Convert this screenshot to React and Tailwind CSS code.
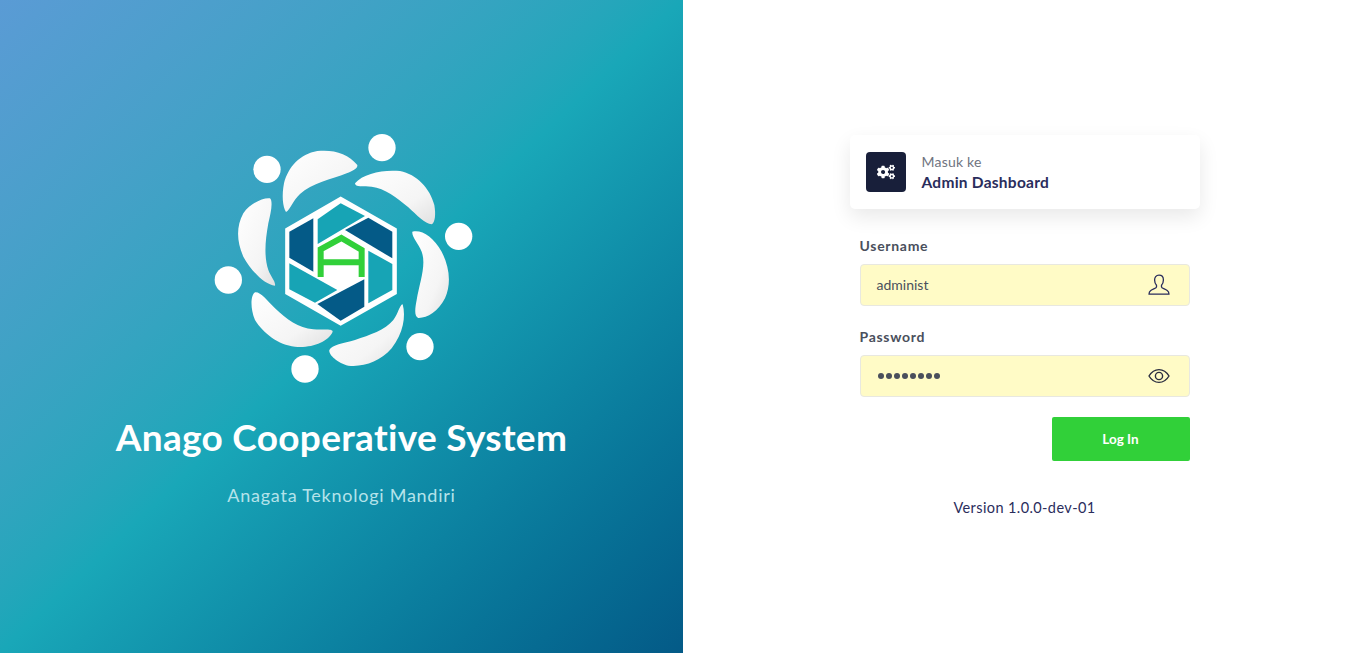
import React from "react";
import { FaCogs } from "react-icons/fa";

function Logo() {
  const crescents = [
    "M472 135C445 100 400 88 352 93C300 102 265 140 252 190C245 225 248 262 258 276C270 270 280 240 300 222C335 190 395 178 440 160C458 153 474 145 472 135Z",
    "M465 190C490 160 550 148 600 153C650 163 690 205 703 255C708 285 705 308 695 313C675 312 650 285 625 262C590 232 555 205 515 200C490 198 465 203 465 190Z",
    "M637 335C665 328 700 350 725 395C748 440 755 490 735 535C715 575 680 595 655 594C642 590 645 565 650 540C658 490 680 435 665 395C655 370 635 350 637 335Z",
    "M608 553C618 590 610 640 575 685C540 725 490 742 445 737C415 730 385 705 388 690C395 675 430 670 465 660C510 645 555 630 580 600C595 582 598 555 608 553Z",
    "M398 635C385 665 335 685 285 680C235 675 190 640 165 600C150 565 152 525 165 517C182 515 200 540 225 565C260 598 295 625 340 628C370 630 398 625 398 635Z",
    "M225 497C195 495 155 455 130 410C110 365 108 320 130 280C150 250 190 232 210 235C220 245 212 280 205 310C195 365 192 410 205 450C212 470 228 485 225 497Z",
  ];
  const circles = [[546, 83], [201, 148], [776, 349], [85, 480], [660, 680], [315, 747]];
  return (
    <svg width="283" height="270" viewBox="0 0 849 810" className="block">
      <defs>
        <linearGradient id="cr" x1="0" y1="0" x2="1" y2="1">
          <stop offset="0" stopColor="#ffffff" />
          <stop offset="0.65" stopColor="#f5f5f5" />
          <stop offset="1" stopColor="#e0e0e0" />
        </linearGradient>
      </defs>
      {crescents.map((d, i) => (
        <path key={i} d={d} fill="url(#cr)" />
      ))}
      {circles.map(([x, y], i) => (
        <circle key={i} cx={x} cy={y} r="41" fill="#fff" />
      ))}
      <polygon points="422,236 585,329 585,519 422,611 261,519 261,329" fill="#fff" stroke="#fff" strokeWidth="11" strokeLinejoin="miter" />
      <polygon points="268,335 340,295 340,455 268,413" fill="#045a87" />
      <polygon points="435,330 505,293 577,335 577,415" fill="#045a87" />
      <polygon points="352,552 493,478 493,560 422,602" fill="#045a87" />
      <polygon points="353,298 422,250 495,288 353,372" fill="#17a4b5" />
      <polygon points="505,392 577,432 577,510 505,550" fill="#17a4b5" />
      <polygon points="268,430 412,510 345,548 268,508" fill="#17a4b5" />
      <path d="M362 471V388L424 354L485 390V471M362 427H485" fill="none" stroke="#31d039" strokeWidth="18" />
    </svg>
  );
}

function UserIcon() {
  return (
    <svg width="22" height="22" viewBox="0 0 22 22" fill="none" stroke="#2a2d5c" strokeWidth="1.3" strokeLinejoin="round">
      <path d="M11 1.2C8 1.2 6.6 3.4 6.6 6C6.6 8.2 7.4 10 8.5 11.2V13C8.5 14 5 15 2.8 16.5C1.5 17.4 1 18.5 1 20.2H21C21 18.5 20.5 17.4 19.2 16.5C17 15 13.5 14 13.5 13V11.2C14.6 10 15.4 8.2 15.4 6C15.4 3.4 14 1.2 11 1.2Z" />
    </svg>
  );
}

function EyeIcon() {
  return (
    <svg width="22" height="16" viewBox="0 0 22 16" fill="none" stroke="#2a2d3f" strokeWidth="1.4">
      <path d="M1 8C3.5 3.8 7 1.6 11 1.6C15 1.6 18.5 3.8 21 8C18.5 12.2 15 14.4 11 14.4C7 14.4 3.5 12.2 1 8Z" />
      <circle cx="11" cy="8" r="3.6" />
    </svg>
  );
}

function Field({ label, children, icon }) {
  return (
    <div className="flex flex-col">
      <label className="text-[14px] leading-[17px] font-bold tracking-[0.7px] text-[#4a4f5c]">{label}</label>
      <div className="mt-[10px] h-[42px] bg-[#fffbc6] border border-[#e8e8e0] rounded-[4px] flex items-center justify-between pl-4 pr-[19px]">
        {children}
        {icon}
      </div>
    </div>
  );
}

export default function App() {
  return (
    <div className="flex h-[653px] w-[1366px] overflow-hidden bg-white font-['Lato',sans-serif]">
      <div className="w-[683px] h-full flex flex-col items-center bg-gradient-to-br from-[#5a9bd5] via-[#19a7b8] to-[#045a87] pt-[120px]">
        <Logo />
        <h1 className="mt-[24px] text-[37px] leading-[46px] font-bold text-white tracking-[0.3px]">Anago Cooperative System</h1>
        <p className="mt-[24px] text-[18px] leading-[22px] tracking-[0.75px] text-[#b5e3ea]">Anagata Teknologi Mandiri</p>
      </div>
      <div className="flex-1 flex flex-col items-center pt-[135px]">
        <div className="w-[350px]">
          <div className="h-[74px] bg-white rounded-[5px] shadow-[0_8px_20px_rgba(0,0,0,0.09)] flex items-center pl-4">
            <div className="w-10 h-10 rounded-[4px] bg-[#181f3a] flex items-center justify-center">
              <FaCogs className="text-white" size={18} />
            </div>
            <div className="ml-4 flex flex-col">
              <span className="text-[14px] leading-[18px] tracking-[0.2px] text-[#6f7480]">Masuk ke</span>
              <span className="mt-[1px] text-[15.5px] leading-[20px] font-bold tracking-[0.25px] text-[#2a2d5c]">Admin Dashboard</span>
            </div>
          </div>
          <div className="px-[10px] mt-[28px] flex flex-col gap-[22px]">
            <Field label="Username" icon={<UserIcon />}>
              <span className="text-[14px] -mt-[2px] text-[#4a4f5c]">administ</span>
            </Field>
            <Field label="Password" icon={<EyeIcon />}>
              <span className="flex gap-[2px] ml-[1px]">
                {[...Array(8)].map((_, i) => (
                  <span key={i} className="w-[6px] h-[6px] rounded-full bg-[#4a4f5c]" />
                ))}
              </span>
            </Field>
            <div className="flex justify-end -mt-[2px]">
              <button className="w-[138px] h-[44px] rounded-[2px] bg-[#31d039] text-white text-[13.5px] font-bold">Log In</button>
            </div>
          </div>
          <p className="mt-[37px] text-center text-[14.5px] leading-[20px] tracking-[0.4px] text-[#2a2d5c]">Version 1.0.0-dev-01</p>
        </div>
      </div>
    </div>
  );
}
